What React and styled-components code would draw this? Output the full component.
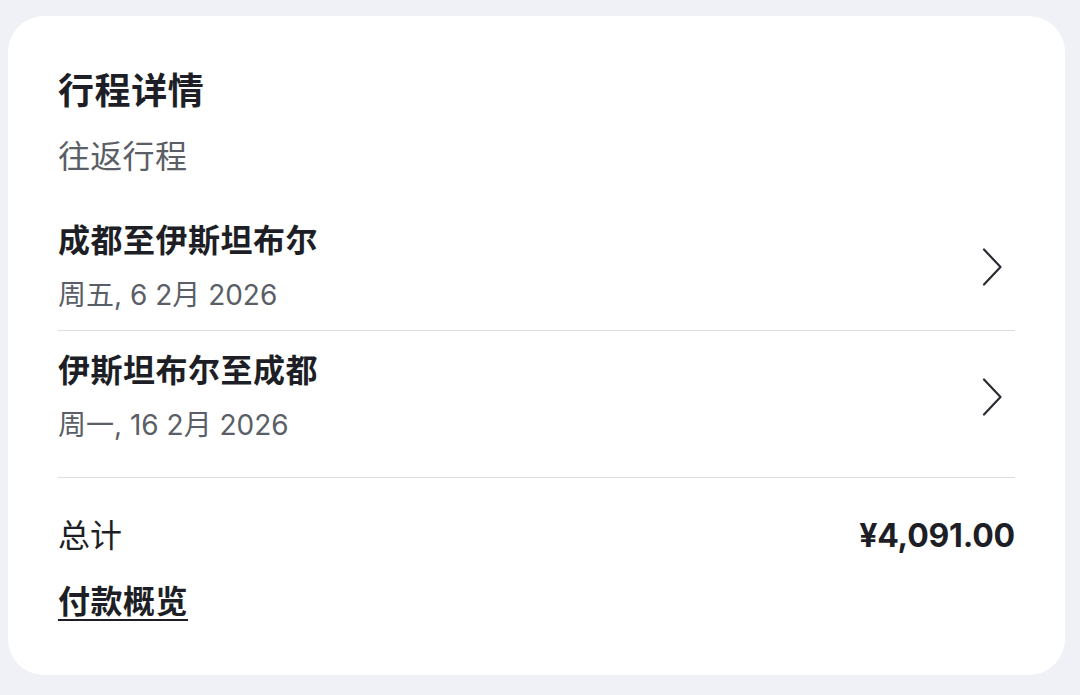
import React from 'react';
import styled, { createGlobalStyle } from 'styled-components';

const GlobalStyle = createGlobalStyle`
    html, body {
        margin: 0;
        padding: 0;
        background: #f0f1f6;
        font-family: "Inter", "Noto Sans CJK SC", sans-serif;
        color: #1e1f26;
    }
`

const Page = styled.div`
    padding: 16px 15px 20px 8px;
`

const Card = styled.section`
    background: #fff;
    border-radius: 36px;
    padding: 53px 50px 53px;
    box-sizing: border-box;
`

const Title = styled.h1`
    margin: 0;
    font-size: 36px;
    line-height: 44px;
    font-weight: 700;
    letter-spacing: 0.6px;
`

const Subtitle = styled.div`
    margin-top: 24px;
    font-size: 32px;
    line-height: 40px;
    color: #5a5e66;
    letter-spacing: 0.3px;
`

const Trips = styled.div`
    margin-top: 24px;
    border-bottom: 1px solid #dcdde4;
    padding-bottom: 17px;
`

const TripRow = styled.div`
    display: flex;
    align-items: center;
    justify-content: space-between;
    padding: 20px 0 17px;
    border-bottom: ${p => p.$last ? 'none' : '1px solid #dcdde4'};
    cursor: pointer;
`

const TripInfo = styled.div`
    display: flex;
    flex-direction: column;
`

const TripName = styled.div`
    font-size: 32px;
    line-height: 40px;
    font-weight: 700;
    letter-spacing: 0.5px;
`

const TripDate = styled.div`
    margin-top: 16px;
    font-size: 28px;
    line-height: 36px;
    color: #5a5e66;
`

const Chevron = styled.svg`
    width: 20px;
    height: 38px;
    margin-right: 13px;
    flex-shrink: 0;
`

const TotalRow = styled.div`
    margin-top: 38px;
    display: flex;
    justify-content: space-between;
    align-items: center;
`

const TotalLabel = styled.div`
    font-size: 32px;
    line-height: 40px;
`

const Price = styled.div`
    font-size: 32px;
    line-height: 40px;
    font-weight: 700;
    letter-spacing: -0.2px;
`

const PayLink = styled.a`
    display: inline-block;
    margin-top: 26px;
    font-size: 32px;
    line-height: 40px;
    font-weight: 700;
    letter-spacing: 0.5px;
    color: #1e1f26;
    text-decoration: underline;
    text-decoration-thickness: 2px;
    text-underline-offset: 6px;
    cursor: pointer;
`

const trips = [
    { name: '成都至伊斯坦布尔', date: '周五, 6 2月 2026' },
    { name: '伊斯坦布尔至成都', date: '周一, 16 2月 2026' },
];

export default function App() {
    return (
        <Page>
            <GlobalStyle />
            <Card>
                <Title>行程详情</Title>
                <Subtitle>往返行程</Subtitle>
                <Trips>
                    {trips.map((t, i) => (
                        <TripRow key={t.name} $last={i === trips.length - 1}>
                            <TripInfo>
                                <TripName>{t.name}</TripName>
                                <TripDate>{t.date}</TripDate>
                            </TripInfo>
                            <Chevron viewBox="0 0 20 38" fill="none">
                                <path d="M2 1.5 L18.5 19 L2 36.5" stroke="#2a2c33" strokeWidth="2.2" strokeLinecap="round" strokeLinejoin="round" />
                            </Chevron>
                        </TripRow>
                    ))}
                </Trips>
                <TotalRow>
                    <TotalLabel>总计</TotalLabel>
                    <Price>¥4,091.00</Price>
                </TotalRow>
                <PayLink>付款概览</PayLink>
            </Card>
        </Page>
    );
}
